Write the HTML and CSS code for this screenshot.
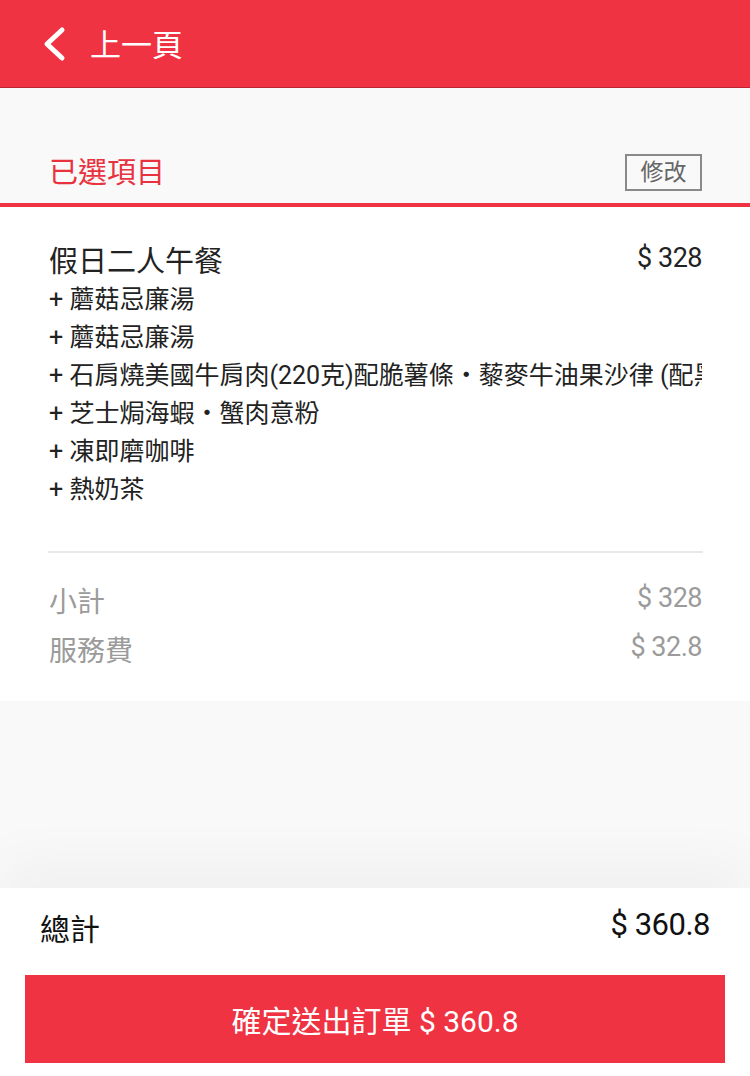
FILE: index.html
```html
<!DOCTYPE html>
<html lang="zh-Hant">
<head>
    <meta charset="UTF-8">
    <meta name="viewport" content="width=device-width, initial-scale=1.0">
    <title>已選項目</title>
    <link rel="stylesheet" href="styles.css">
</head>
<body>
    <div class="page">
        <header class="topbar">
            <a class="back">
                <svg class="back-icon" width="26" height="36" viewBox="0 0 26 36">
                    <polyline points="20,4 5,18 20,32" fill="none" stroke="#fff" stroke-width="5" stroke-linecap="round" stroke-linejoin="round"/>
                </svg>
                <span>上一頁</span>
            </a>
        </header>

        <div class="section-title">
            <h2>已選項目</h2>
            <a class="btn-edit">修改</a>
        </div>

        <div class="order">
            <div class="item">
                <div class="item-head">
                    <span class="item-name">假日二人午餐</span>
                    <span class="price">$ 328</span>
                </div>
                <ul class="options">
                    <li>+ 蘑菇忌廉湯</li>
                    <li>+ 蘑菇忌廉湯</li>
                    <li>+ 石肩燒美國牛肩肉(220克)配脆薯條・藜麥牛油果沙律 (配黑醋汁)</li>
                    <li>+ 芝士焗海蝦・蟹肉意粉</li>
                    <li>+ 凍即磨咖啡</li>
                    <li>+ 熱奶茶</li>
                </ul>
            </div>

            <div class="summary">
                <div class="summary-row">
                    <span>小計</span>
                    <span class="price">$ 328</span>
                </div>
                <div class="summary-row">
                    <span>服務費</span>
                    <span class="price">$ 32.8</span>
                </div>
            </div>
        </div>

        <footer class="checkout">
            <div class="total">
                <span>總計</span>
                <span class="price">$ 360.8</span>
            </div>
            <button class="btn-submit">確定送出訂單 $ 360.8</button>
        </footer>
    </div>
</body>
</html>
```

FILE: styles.css
```css
body, html {
    margin: 0;
    padding: 0;
    font-family: Roboto, "Noto Sans CJK TC", sans-serif;
    background-color: #f9f9f9;
    color: #222;
}

.page {
    display: flex;
    flex-direction: column;
    min-height: 100vh;
}

.topbar {
    height: 87px;
    background-color: #ef3342;
    border-bottom: 1px solid #b92632;
    display: flex;
    align-items: center;
    padding: 0 42px;
}

.back {
    display: flex;
    align-items: center;
    color: #fff;
    font-size: 31px;
    cursor: pointer;
}

.back-icon {
    margin-right: 22px;
}

.back span {
    position: relative;
    top: -1px;
}

.section-title {
    display: flex;
    justify-content: space-between;
    align-items: center;
    padding: 66px 48px 12px 49px;
    border-bottom: 4px solid #ef3342;
}

.section-title h2 {
    margin: 0;
    font-size: 29px;
    font-weight: normal;
    color: #e8323f;
    line-height: 37px;
    position: relative;
    top: 1px;
}

.btn-edit {
    box-sizing: border-box;
    height: 37px;
    width: 77px;
    border: 2px solid #8a8a8a;
    color: #666;
    font-size: 23px;
    line-height: 33px;
    text-align: center;
    cursor: pointer;
}

.order {
    background-color: #fff;
    padding: 36px 48px 25px 49px;
}

.item-head {
    display: flex;
    justify-content: space-between;
    align-items: center;
    line-height: 38px;
}

.item-name {
    font-size: 29px;
}

.price {
    font-size: 27px;
    letter-spacing: -0.5px;
    position: relative;
    top: -4px;
}

.options {
    list-style: none;
    margin: 0;
    padding: 0;
    overflow: hidden;
}

.options li {
    font-size: 25px;
    line-height: 38px;
    white-space: nowrap;
}

.summary {
    margin-top: 42px;
    border-top: 2px solid #e8e8e8;
    padding-top: 25px;
    margin-left: -1px;
    margin-right: -1px;
    padding-left: 1px;
    padding-right: 1px;
}

.summary-row {
    display: flex;
    justify-content: space-between;
    align-items: center;
    line-height: 49px;
    font-size: 28px;
    color: #9b9b9b;
}

.checkout {
    margin-top: auto;
    background-color: #fff;
    box-shadow: 0 -30px 50px rgba(0, 0, 0, 0.035);
    padding: 12px 0 13px;
}

.total {
    display: flex;
    justify-content: space-between;
    align-items: center;
    height: 54px;
    padding: 0 40px;
    font-size: 30px;
    color: #111;
}

.total .price {
    font-size: 31px;
    top: -3px;
}

.btn-submit {
    display: block;
    box-sizing: border-box;
    width: 700px;
    height: 88px;
    margin: 21px auto 0;
    border: none;
    background-color: #ef3342;
    color: #fff;
    font-family: Roboto, "Noto Sans CJK TC", sans-serif;
    font-size: 30px;
    cursor: pointer;
}
```
